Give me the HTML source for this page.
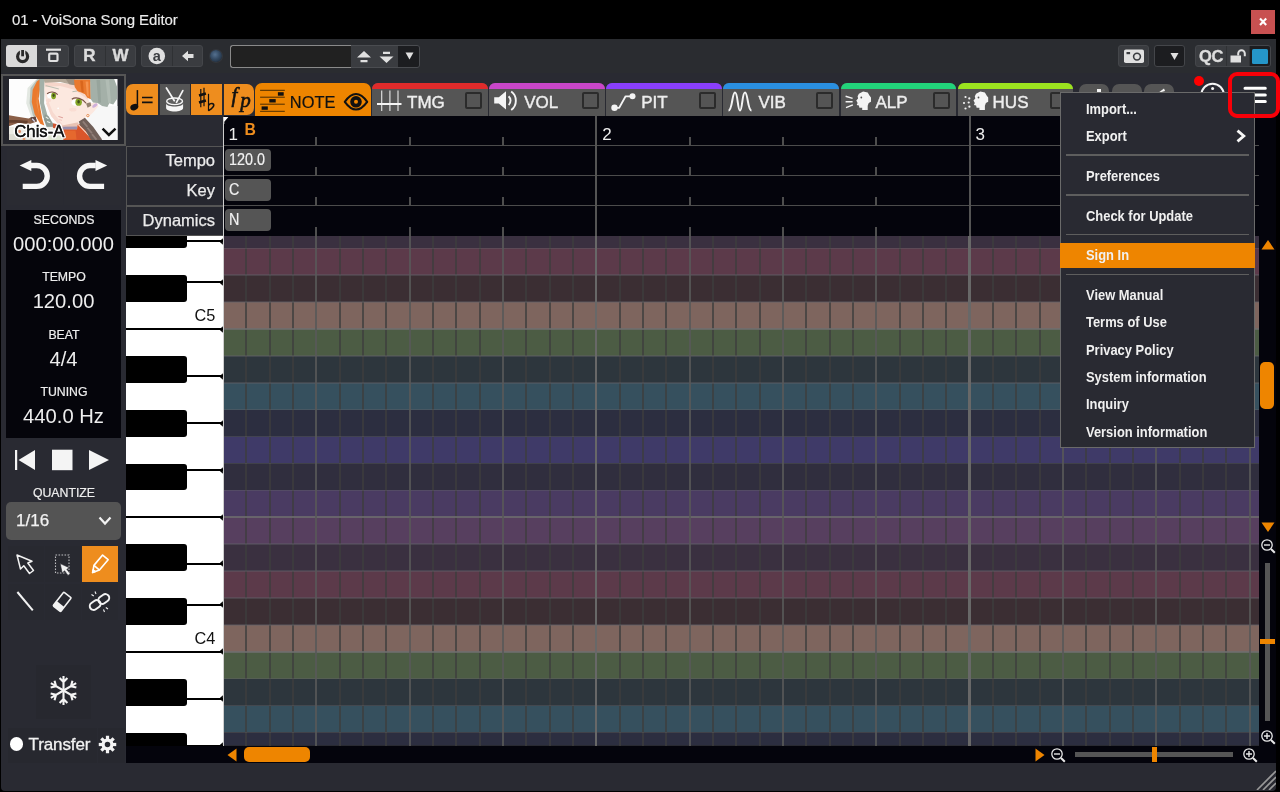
<!DOCTYPE html>
<html>
<head>
<meta charset="utf-8">
<title>01 - VoiSona Song Editor</title>
<style>
*{box-sizing:border-box;margin:0;padding:0}
html{will-change:transform}
html,body{width:1280px;height:792px;overflow:hidden;background:#000;font-family:"Liberation Sans",sans-serif;color:#eee}
.a{position:absolute}
#win{left:1px;top:0;width:1275px;height:791px;background:#292a32;border-radius:0 0 4px 4px;overflow:hidden}
#title{left:0;top:0;width:1280px;height:38.5px;background:#000}
#title span{position:absolute;left:12px;top:11.3px;font-size:15px;color:#ebebeb;letter-spacing:-0.12px;-webkit-text-stroke:0.15px #ebebeb}
#close{left:1251px;top:9.8px;width:24.2px;height:24px;background:#c85151}
#tb{left:1px;top:39px;width:1275px;height:34px;background:#2a2c30}
.grp{position:absolute;top:45px;height:22px;border-radius:3px;background:#3a3c40;border:1px solid #44464a}
/* main */
#ruler{left:224px;top:116px;width:1035px;height:120px;background:#04040c}
#grid{left:224px;top:236px;width:1035px;height:510px;overflow:hidden}
.row{position:absolute;left:0;width:1035px}
#piano{left:126px;top:236px;width:97px;height:510px;background:#fff;overflow:hidden}
.bk{position:absolute;left:0;width:61px;background:#000;border-radius:0 3px 3px 0}
.wl{position:absolute;left:0;width:97px;height:1.8px;background:#000}
.lbl{position:absolute;left:126px;margin-top:-0.5px;width:97px;height:30px;background:#26272f;border:1px solid #555;border-right:none;font-size:16.5px;color:#ececec;text-align:right;padding:4.5px 8px 0 0;-webkit-text-stroke:0.25px #ececec}
.val{position:absolute;left:224.9px;width:46px;height:22.2px;background:#555;border-radius:4px}
.val span{position:absolute;left:4px;top:1.2px;font-size:16.8px;color:#f2f2f2;transform:scaleX(0.855);transform-origin:0 50%;-webkit-text-stroke:0.2px #f2f2f2;white-space:nowrap}
.tab{position:absolute;top:83.3px;width:115.6px;height:32.7px;background:#555;border-radius:6px 6px 0 0;overflow:hidden;font-size:17px;color:#eee}
.tab i{position:absolute;left:0;top:0;width:100%;height:5.5px}
.tab b{position:absolute;font-weight:normal;top:9.7px;-webkit-text-stroke:0.4px #eee}
.tab u{position:absolute;left:92.6px;top:9px;width:17px;height:17px;border:2px solid #2b2b2b;border-radius:2px;background:#555}
.obtn{position:absolute;top:83px;height:33px;background:#ee8d1e}
.info{position:absolute;left:7px;width:114px;text-align:center;color:#eee}
.info.s{font-size:12.3px;-webkit-text-stroke:0.2px #eee}
.info.v{font-size:20.2px;left:6.5px}
.tool{position:absolute;width:36px;height:36px;background:#27282f}
#menu{left:1060px;top:92px;width:195px;height:356px;background:#292a32;border:1px solid #6a6a6a}
#menu div{position:absolute;left:25px;font-size:14.6px;line-height:17px;font-weight:bold;color:#f0f0f0;white-space:nowrap;transform:scaleX(0.885);transform-origin:0 50%}
#menu hr{position:absolute;left:5px;width:183px;height:1.6px;border:none;background:#5e5e5e}
</style>
</head>
<body>
<div id="win" class="a"></div>
<div id="title" class="a"><span>01 - VoiSona Song Editor</span></div>
<div id="close" class="a"><svg width="24" height="24"><path d="M9 8.6l6.2 6.4M15.2 8.6l-6.2 6.4" stroke="#fff" stroke-width="2.1"/></svg></div>
<div id="tb" class="a"></div>
<div class="grp" style="left:6px;width:63px"></div>
<div class="a" style="left:6px;top:45px;width:31px;height:22px;background:#d9d9d9;border-radius:3px 0 0 3px"></div>
<svg class="a" style="left:6px;top:45px" width="31" height="22"><circle cx="16.6" cy="11.6" r="5" fill="none" stroke="#2a2a2a" stroke-width="3.2"/><path d="M16.6 4.5V11.5" stroke="#d9d9d9" stroke-width="5.4"/><path d="M16.6 5V11.3" stroke="#2a2a2a" stroke-width="2.8"/></svg>
<svg class="a" style="left:37px;top:45px" width="31" height="22"><path d="M9 4.7H24" stroke="#e0e0e0" stroke-width="2.2"/><rect x="12.2" y="8.6" width="8.3" height="7.4" rx="1" fill="none" stroke="#e0e0e0" stroke-width="2.2"/></svg>
<div class="grp" style="left:74px;width:62px"></div>
<div class="a" style="left:104.5px;top:46px;width:1px;height:20px;background:#2f3134"></div>
<div class="a" style="left:74px;top:46px;width:31px;text-align:center;font-size:17px;font-weight:bold;color:#dcdcdc;-webkit-text-stroke:0.4px #dcdcdc">R</div>
<div class="a" style="left:105px;top:46px;width:31px;text-align:center;font-size:17px;font-weight:bold;color:#dcdcdc;-webkit-text-stroke:0.4px #dcdcdc">W</div>
<div class="grp" style="left:141px;width:62px"></div>
<div class="a" style="left:171.5px;top:46px;width:1px;height:20px;background:#2f3134"></div>
<svg class="a" style="left:141px;top:45px" width="31" height="22"><circle cx="15.8" cy="11" r="8.3" fill="#e0e0e0"/><text x="15.8" y="15.6" style="font-family:'Liberation Sans',sans-serif" font-weight="bold" font-size="14.5" text-anchor="middle" fill="#3a3c40">a</text></svg>
<svg class="a" style="left:172px;top:45px" width="31" height="22"><path d="M10 11L16 5.8V9H21.5V13H16V16.2Z" fill="#e0e0e0"/></svg>
<div class="a" style="left:210px;top:50px;width:12px;height:12px;border-radius:6px;background:radial-gradient(circle at 42% 38%,#54708f 0%,#344a63 45%,#18222f 100%);box-shadow:0 0 0 1px #34373c"></div>
<div class="a" style="left:230px;top:44.5px;width:190px;height:23px;border-radius:3px;background:#3a3c40;border:1px solid #4a4c50"></div>
<div class="a" style="left:230px;top:44.5px;width:121px;height:23px;border-radius:3px 0 0 3px;background:#212121;border:1.5px solid #8a8a8a;border-right:none"></div>
<div class="a" style="left:398px;top:45.5px;width:21px;height:21px;border-radius:0 2px 2px 0;background:#1c1d20"></div>
<svg class="a" style="left:351px;top:46px" width="47" height="22"><path d="M6 11.5L13 5L20 11.5Z M9.5 14H16.5V16.2H9.5Z" fill="#e0e0e0"/><path d="M28.5 10.5L35.5 17L42.5 10.5Z M32 5.8H39V8H32Z" fill="#e0e0e0"/></svg>
<svg class="a" style="left:398px;top:45px" width="22" height="22"><path d="M7.5 7.5H15.5L11.5 14.5Z" fill="#e0e0e0"/></svg>
<div class="grp" style="left:1118px;width:31px"></div>
<svg class="a" style="left:1118px;top:45px" width="31" height="22"><rect x="6" y="4.5" width="20" height="13.5" rx="1.8" fill="#e0e0e0"/><rect x="8.5" y="7" width="3.6" height="2.2" fill="#3a3c40"/><circle cx="19" cy="11.6" r="3.4" fill="#e0e0e0" stroke="#3a3c40" stroke-width="1.6"/></svg>
<div class="grp" style="left:1154px;width:31px;background:#1c1d20"></div>
<svg class="a" style="left:1154px;top:45px" width="31" height="22"><path d="M16.5 8H24.5L20.5 15Z" fill="#e0e0e0"/></svg>
<div class="grp" style="left:1195px;width:76px"></div>
<div class="a" style="left:1226px;top:46px;width:1px;height:20px;background:#2f3134"></div>
<div class="a" style="left:1249px;top:46px;width:1px;height:20px;background:#2f3134"></div>
<div class="a" style="left:1196px;top:46.5px;width:30px;text-align:center;font-size:16.5px;font-weight:bold;color:#dcdcdc;letter-spacing:-0.3px;-webkit-text-stroke:0.35px #dcdcdc">QC</div>
<svg class="a" style="left:1227px;top:45px" width="22" height="22"><rect x="3.5" y="10.5" width="10.5" height="7" fill="#e0e0e0"/><path d="M11.2 10.5V8.6A3.3 3.3 0 0 1 17.8 8.6V11.2" fill="none" stroke="#e0e0e0" stroke-width="2"/></svg>
<div class="a" style="left:1250px;top:46px;width:20px;height:20px;background:#1c1d20;border-radius:0 2px 2px 0"></div>
<div class="a" style="left:1251.5px;top:48.5px;width:16.5px;height:15px;background:#2596c8;border-radius:1.5px"></div>
<div class="a" style="left:1px;top:73.5px;width:125px;height:72.5px;background:#24252c;border:2.5px solid #555"></div>
<svg class="a" style="left:9.2px;top:78.9px" width="108.5" height="61.3" viewBox="35 32 1197 676" preserveAspectRatio="none"><defs><filter id="bl" x="-5%" y="-5%" width="110%" height="110%"><feGaussianBlur stdDeviation="5"/></filter><clipPath id="cp"><rect x="35" y="32" width="1197" height="676"/></clipPath></defs><rect x="35" y="32" width="1197" height="676" fill="#fdfdfd"/><g clip-path="url(#cp)"><g filter="url(#bl)"><rect x="900" y="330" width="340" height="380" fill="#f7f7f7"/><path d="M340 32L240 130L225 300L280 450L340 450L310 250L350 80L390 32Z" fill="#e3e8e2"/><path d="M350 32L272 130L262 300L300 440L335 440L305 250L345 80L385 32Z" fill="#b7c2ba"/><path d="M342 60L378 32L385 90L362 250L402 470L425 545L380 525L318 420L286 285L296 150Z" fill="#ea7a2e"/><path d="M345 160L340 300L370 440L350 300Z" fill="#f39a55"/><path d="M372 32L435 32L428 110L422 300L470 470L530 565L470 565L410 450L377 300L370 120Z" fill="#a3b0a8"/><path d="M430 420L470 440L530 540L500 580L450 560L420 480Z" fill="#8e9b93"/><path d="M440 450L470 470M455 500L490 515" stroke="#e9efe9" stroke-width="12"/><path d="M35 432L130 448L250 468L325 442L345 500L255 530L140 515L35 552Z" fill="#8a5e46"/><path d="M35 500L120 500L240 508" stroke="#64402f" stroke-width="30" fill="none"/><path d="M270 455L330 448L338 492L290 500Z" fill="#5e4a44"/><path d="M290 470L320 500" stroke="#d8d4e6" stroke-width="14"/><rect x="35" y="560" width="640" height="150" fill="#ecebe4"/><path d="M35 640H300V708H35Z" fill="#dcdad0"/><circle cx="150" cy="610" r="18" fill="#e08a66"/><circle cx="200" cy="695" r="16" fill="#e6996e"/><path d="M470 660H760V708H470Z" fill="#dfe6d4"/><path d="M428 60L760 92L900 232L930 300L1005 288L1022 330L965 400L915 445L880 455L800 512L700 545L640 552L575 528L500 440L445 300L425 150Z" fill="#fce8df"/><path d="M428 60L760 92L900 232L905 260L760 150L600 110L432 120Z" fill="#f6d6ca"/><path d="M445 300L500 440L575 528L640 552L600 500L520 400L470 280Z" fill="#f7d9cf"/><path d="M620 545L800 510L815 590L625 590Z" fill="#e9c3b4"/><path d="M625 558L785 556L785 592L625 592Z" fill="#9c90ad"/><path d="M635 590L785 590L792 540L835 520L990 708L635 708Z" fill="#d9552a"/><path d="M650 600L770 600L780 700L660 700Z" fill="#e5672f"/><path d="M800 535L965 705" stroke="#f3ddcd" stroke-width="12"/><path d="M520 520L570 530L560 580L520 570Z" fill="#cf5630"/><path d="M805 500L872 458L965 560L1062 700L1050 708L940 708L880 600L820 545Z" fill="#6f5e59"/><path d="M850 500L900 560M900 570L950 630M950 640L1000 700" stroke="#8f7d76" stroke-width="20"/><path d="M420 32L945 32L945 60L765 104L600 64L430 74Z" fill="#b3a898"/><path d="M660 32L760 32L765 100L700 90Z" fill="#9b8f80"/><path d="M752 40L935 40L938 255L900 240L872 200L832 180L792 168L760 120Z" fill="#e9792d"/><path d="M820 50L850 50L860 180L835 175Z" fill="#d9661f"/><path d="M880 60L910 60L915 230L895 215Z" fill="#f59450"/><path d="M930 32L1195 32L1228 120L1232 245L1185 312L1142 300L1120 342L1062 330L1012 298L962 290L936 252Z" fill="#a4b0a8"/><path d="M1000 40L1040 40L1050 290L1020 295Z" fill="#97a49c"/><path d="M1100 40L1140 40L1160 290L1130 300Z" fill="#b1bcb4"/><path d="M885 302L935 288L942 328L902 348Z" fill="#95826f"/><ellipse cx="982" cy="325" rx="34" ry="17" transform="rotate(-35 982 325)" fill="#cfb0da"/><circle cx="905" cy="436" r="13" fill="#fff" stroke="#e27a35" stroke-width="9"/><ellipse cx="495" cy="215" rx="40" ry="32" fill="#fff"/><ellipse cx="527" cy="218" rx="27" ry="38" fill="#86a626"/><ellipse cx="527" cy="212" rx="12" ry="18" fill="#3f4d1c"/><path d="M455 195C490 165 540 170 572 205" stroke="#7a5346" stroke-width="13" fill="none"/><ellipse cx="770" cy="292" rx="46" ry="34" fill="#fff"/><ellipse cx="803" cy="288" rx="36" ry="40" fill="#86a626"/><ellipse cx="803" cy="282" rx="14" ry="19" fill="#3f4d1c"/><path d="M728 255C770 225 850 245 885 300" stroke="#7a5346" stroke-width="13" fill="none"/><path d="M440 105L585 142" stroke="#aab4a6" stroke-width="9"/><path d="M735 172L785 165" stroke="#aab4a6" stroke-width="9"/><ellipse cx="470" cy="270" rx="30" ry="18" fill="#f6c9be" opacity="0.4"/><ellipse cx="740" cy="370" rx="40" ry="20" fill="#f6c9be" opacity="0.35"/><circle cx="577" cy="355" r="10" fill="#fff"/><path d="M580 445L630 460" stroke="#dd9e98" stroke-width="11"/><path d="M590 480L620 488" stroke="#efbab2" stroke-width="8"/></g></g></svg><svg class="a" style="left:9px;top:118px" width="70" height="24"><text x="5.3" y="18.7" style="font-family:'Liberation Sans',sans-serif;font-size:16.7px;paint-order:stroke" fill="#141414" stroke="#fff" stroke-width="3.2" stroke-linejoin="round" stroke-opacity="0.92">Chis-A</text><text x="5.3" y="18.7" style="font-family:'Liberation Sans',sans-serif;font-size:16.7px" fill="#141414" stroke="#141414" stroke-width="0.3">Chis-A</text></svg><svg class="a" style="left:100px;top:125px" width="18" height="13"><path d="M2.6 3.6L8.9 9.9L15.5 3.6" fill="none" stroke="#111" stroke-width="2.5"/></svg>
<div class="a" style="left:7px;top:149px;width:56px;height:56px;background:#2a2b32"></div>
<div class="a" style="left:64px;top:149px;width:57px;height:56px;background:#2a2b32"></div>
<svg class="a" style="left:0;top:0" width="126" height="210"><path d="M31 165.5H36.8A10.45 10.45 0 0 1 36.8 186.4H22.7" fill="none" stroke="#f6f6f6" stroke-width="5.4"/><path d="M19.6 165.5L31.3 159.9V171.1Z" fill="#f6f6f6"/><g transform="translate(126.8,0) scale(-1,1)"><path d="M31 165.5H36.8A10.45 10.45 0 0 1 36.8 186.4H22.7" fill="none" stroke="#f6f6f6" stroke-width="5.4"/><path d="M19.6 165.5L31.3 159.9V171.1Z" fill="#f6f6f6"/></g></svg>
<div class="a" style="left:6px;top:209.5px;width:115px;height:228.5px;background:#05050b"></div>
<div class="info s" style="top:213.0px">SECONDS</div>
<div class="info v" style="top:232.8px">000:00.000</div>
<div class="info s" style="top:270.4px">TEMPO</div>
<div class="info v" style="top:290.2px">120.00</div>
<div class="info s" style="top:327.8px">BEAT</div>
<div class="info v" style="top:347.6px">4/4</div>
<div class="info s" style="top:385.2px">TUNING</div>
<div class="info v" style="top:405.0px">440.0 Hz</div>
<svg class="a" style="left:7px;top:444px" width="114" height="32"><path d="M8 6H10.2V26H8Z M28 6V26L11.5 16Z" fill="#f4f4f4"/><rect x="45" y="5.7" width="20.5" height="20.5" fill="#f4f4f4"/><path d="M82 6V26L102 16Z" fill="#f4f4f4"/></svg>
<div class="info s" style="top:486px">QUANTIZE</div>
<div class="a" style="left:6px;top:502px;width:115px;height:37.5px;border-radius:5px;background:#545454"></div>
<div class="a" style="left:16px;top:510.5px;font-size:17px;color:#f2f2f2;-webkit-text-stroke:0.25px #f2f2f2">1/16</div>
<svg class="a" style="left:97px;top:514px" width="16" height="14"><path d="M2.5 3.5L8 9.5L13.5 3.5" fill="none" stroke="#f2f2f2" stroke-width="2.2"/></svg>
<div class="tool" style="left:8px;top:546px;background:#282930"></div>
<div class="tool" style="left:45px;top:546px;background:#282930"></div>
<div class="tool" style="left:82px;top:546px;background:#ee8d1e"></div>
<div class="tool" style="left:8px;top:584px;background:#282930"></div>
<div class="tool" style="left:45px;top:584px;background:#282930"></div>
<div class="tool" style="left:82px;top:584px;background:#282930"></div>
<svg class="a" style="left:8px;top:546px" width="36" height="36"><path d="M9 9L12.5 23L15.8 19.8L21.5 27.5L25.5 24.5L19.8 17L24 15.2Z" fill="none" stroke="#f2f2f2" stroke-width="1.5" stroke-linejoin="round"/></svg>
<svg class="a" style="left:45px;top:546px" width="36" height="36"><rect x="10.5" y="9" width="13.5" height="18" fill="none" stroke="#f2f2f2" stroke-width="1.1" stroke-dasharray="1.6 1.4" opacity="0.75"/><path d="M15.2 17.6L17.2 27L19.6 24.8L23 29.4L25.2 27.8L21.8 23.3L24.4 21.8Z" fill="#f2f2f2" stroke="#282930" stroke-width="0.6"/></svg>
<svg class="a" style="left:82px;top:546px" width="36" height="36"><g transform="translate(17.3,18.6) rotate(40) scale(0.9)" fill="none" stroke="#fff" stroke-width="1.8" stroke-linejoin="round"><path d="M-4 -10.5H4V4.5L0 11.5L-4 4.5Z"/><path d="M-4 4.5H4"/><path d="M-1.5 8.8L0 11.5L1.5 8.8Z" fill="#fff"/></g></svg>
<svg class="a" style="left:8px;top:584px" width="36" height="36"><path d="M9.4 8L24.8 26.4" stroke="#f2f2f2" stroke-width="2"/></svg>
<svg class="a" style="left:45px;top:584px" width="36" height="36"><g transform="translate(17.2,17.8) rotate(38) scale(0.92)"><rect x="-5.2" y="-9.5" width="10.4" height="19" rx="1" fill="none" stroke="#f2f2f2" stroke-width="1.7"/><rect x="-5.2" y="3" width="10.4" height="6.5" fill="#f2f2f2"/></g></svg>
<svg class="a" style="left:82px;top:584px" width="36" height="36"><g transform="translate(17.5,18) rotate(-35)" fill="none" stroke="#f2f2f2" stroke-width="2"><rect x="-11" y="-3.8" width="11.5" height="7.6" rx="3.8"/><rect x="-0.5" y="-3.8" width="11.5" height="7.6" rx="3.8"/></g><path d="M13 7.5L14 10M9.5 10.5L11.8 12M22.5 28L21.5 25.5M26 25L23.8 23.5" stroke="#f2f2f2" stroke-width="1.1"/></svg>
<div class="a" style="left:36px;top:665px;width:55px;height:54px;background:#27282f"></div>
<svg class="a" style="left:47px;top:674.3px" width="33" height="33" viewBox="-16.5 -16.5 33 33"><g stroke="#f4f4f4" stroke-width="2.1" fill="none"><g transform="rotate(0)"><path d="M0 0V-14.6M-3.9 -12.6L0 -8.6L3.9 -12.6"/></g><g transform="rotate(60)"><path d="M0 0V-14.6M-3.9 -12.6L0 -8.6L3.9 -12.6"/></g><g transform="rotate(120)"><path d="M0 0V-14.6M-3.9 -12.6L0 -8.6L3.9 -12.6"/></g><g transform="rotate(180)"><path d="M0 0V-14.6M-3.9 -12.6L0 -8.6L3.9 -12.6"/></g><g transform="rotate(240)"><path d="M0 0V-14.6M-3.9 -12.6L0 -8.6L3.9 -12.6"/></g><g transform="rotate(300)"><path d="M0 0V-14.6M-3.9 -12.6L0 -8.6L3.9 -12.6"/></g></g></svg>
<div class="a" style="left:7.5px;top:727.5px;width:89px;height:35px;background:#27282f"></div>
<div class="a" style="left:97.5px;top:727.5px;width:27.5px;height:35px;background:#27282f"></div>
<div class="a" style="left:9.8px;top:737.3px;width:13.5px;height:13.5px;border-radius:7px;background:#fff"></div>
<div class="a" style="left:28.5px;top:735px;font-size:17px;color:#f2f2f2;letter-spacing:-0.1px;-webkit-text-stroke:0.3px #f2f2f2">Transfer</div>
<svg class="a" style="left:98.3px;top:734.8px" width="19" height="19" viewBox="-10 -10 20 20"><g fill="#f4f4f4"><rect x="-1.7" y="-9.2" width="3.4" height="5" transform="rotate(0)"/><rect x="-1.7" y="-9.2" width="3.4" height="5" transform="rotate(45)"/><rect x="-1.7" y="-9.2" width="3.4" height="5" transform="rotate(90)"/><rect x="-1.7" y="-9.2" width="3.4" height="5" transform="rotate(135)"/><rect x="-1.7" y="-9.2" width="3.4" height="5" transform="rotate(180)"/><rect x="-1.7" y="-9.2" width="3.4" height="5" transform="rotate(225)"/><rect x="-1.7" y="-9.2" width="3.4" height="5" transform="rotate(270)"/><rect x="-1.7" y="-9.2" width="3.4" height="5" transform="rotate(315)"/></g><circle r="4.6" fill="none" stroke="#f4f4f4" stroke-width="3.4"/></svg>
<div class="obtn" style="left:126.3px;width:31.5px;border-radius:7px 0 0 7px;top:83.6px;height:31.6px"></div>
<div class="obtn" style="left:159.5px;width:30px;background:#555;top:83.6px;height:31.6px"></div>
<div class="obtn" style="left:191px;width:30.8px;top:83.6px;height:31.6px"></div>
<div class="obtn" style="left:223.8px;width:30.4px;border-radius:0 7px 7px 0;top:83.6px;height:31.6px"></div>
<svg class="a" style="left:126.3px;top:83px" width="32" height="33"><ellipse cx="8.3" cy="24.1" rx="4.1" ry="3" transform="rotate(-22 8.3 24.1)" fill="#111"/><path d="M11.4 23.6V7.1" stroke="#111" stroke-width="1.5"/><path d="M16 14.5H26.6M16 19.3H26.6" stroke="#111" stroke-width="1.7"/></svg>
<svg class="a" style="left:159.6px;top:83px" width="31" height="33"><path d="M6.1 20.3V25C6.1 29.6 23.1 29.6 23.1 25V20.3C23.1 24.6 6.1 24.6 6.1 20.3Z" fill="#f6f6f6"/><ellipse cx="14.6" cy="18.3" rx="7.9" ry="3.3" fill="#606060" stroke="#f6f6f6" stroke-width="1.4"/><path d="M6.4 5L14.3 17.7M22.8 7.6L16.5 19.3" stroke="#f6f6f6" stroke-width="1.7" stroke-linecap="round"/></svg>
<svg class="a" style="left:191px;top:83px" width="31" height="33"><g stroke="#111" fill="none"><path d="M9.8 6V24.3M13 4.8V23.2" stroke-width="1.2"/><path d="M8 12.6L14.9 10.6M8 19.4L14.9 17.4" stroke-width="2.6"/><path d="M17.5 10.8V27.8" stroke-width="1.2"/><path d="M17.5 22.2C19.5 19.8 23.2 20 22.7 22.6C22.2 24.8 19.3 26.5 17.5 27.8" stroke-width="1.6"/></g></svg>
<svg class="a" style="left:223.9px;top:83px" width="31" height="33"><g style="font-family:'Liberation Serif',serif;font-style:italic" fill="#111" stroke="#111" stroke-width="0.6"><text x="7.6" y="18.6" font-size="21">f</text><text x="16.2" y="24.2" font-size="21">p</text></g></svg>
<div class="obtn" style="left:255.2px;width:115.8px;border-radius:7px 7px 0 0;background:#ee8500"></div>
<svg class="a" style="left:255.2px;top:83px" width="116" height="33"><g stroke="#4a2c00" stroke-width="1"><path d="M5.1 7.3H29.8M5.1 14.2H29.8M5.1 21.2H29.8M5.1 28.3H29.8"/></g><rect x="22.9" y="9.2" width="5.8" height="3.5" fill="#111"/><rect x="14.3" y="16.1" width="6.4" height="3.4" fill="#111"/><rect x="6.6" y="23.4" width="6.2" height="3.4" fill="#111"/><path d="M89.8 18.8Q101 3.3 112.2 18.8Q101 34.3 89.8 18.8Z" fill="none" stroke="#111" stroke-width="2.1" stroke-linejoin="round"/><circle cx="101" cy="18.8" r="3.9" fill="none" stroke="#111" stroke-width="3.8"/></svg>
<div class="a" style="left:289.8px;top:93.2px;font-size:16.4px;color:#111;-webkit-text-stroke:0.2px #111">NOTE</div>
<div class="tab" style="left:372px"><i style="background:#e02b2b"></i><svg style="position:absolute;left:0;top:0" width="34" height="33"><g stroke="#f4f4f4" fill="none"><path d="M9.7 7.5V28M17.9 7.5V28M26 7.5V28" stroke-width="1.2" opacity="0.85"/><path d="M5 21H29.5" stroke-width="2.2"/></g></svg><b style="left:35px">TMG</b><u></u></div>
<div class="tab" style="left:489.2px"><i style="background:#c946c9"></i><svg style="position:absolute;left:0;top:0" width="34" height="33"><path d="M5.2 14.2H9.8L17 8.2V26.4L9.8 20.6H5.2Z" fill="#f4f4f4"/><path d="M19.6 13.2C22.2 15.6 22.2 19.6 19.6 22M22.2 8.6C28.4 13 28.4 22.6 22.2 27" fill="none" stroke="#f4f4f4" stroke-width="1.9"/></svg><b style="left:35px">VOL</b><u></u></div>
<div class="tab" style="left:606.2px"><i style="background:#8a3ffc"></i><svg style="position:absolute;left:0;top:0" width="34" height="33"><path d="M8.5 24.8H13.2L19.6 13.3H26" fill="none" stroke="#f4f4f4" stroke-width="1.8" stroke-linejoin="round"/><circle cx="8.5" cy="24.8" r="3.2" fill="#f4f4f4"/><circle cx="26.5" cy="13.3" r="3" fill="#f4f4f4"/></svg><b style="left:35px">PIT</b><u></u></div>
<div class="tab" style="left:723.4px"><i style="background:#2a8fe0"></i><svg style="position:absolute;left:0;top:0" width="34" height="33"><path d="M5.5 27.5C9.5 27.5 9 9.5 12 9.5C15 9.5 14.5 27.5 17 27.5C19.5 27.5 19 9.5 22 9.5C25 9.5 24.5 27.5 28.5 27.5" fill="none" stroke="#f4f4f4" stroke-width="2"/></svg><b style="left:35px">VIB</b><u></u></div>
<div class="tab" style="left:840.5px"><i style="background:#22d37a"></i><svg style="position:absolute;left:0;top:0" width="34" height="33"><path d="M4.6 13.2L11.6 15.4M4.6 18.8H11.6M5 24.6L11.9 21.9" stroke="#f4f4f4" stroke-width="1.5"/><path d="M17.9 10.8L22.1 8.4L26.7 9.5L28.6 12.7L30 14.5V18.8L27.7 20L26.7 22.8V26.9H21.2V24.7H18.4L17.9 22.4L15.7 21.9L16.6 20L15.3 17.6L17.1 15.4L16.6 13.2Z" fill="#f4f4f4"/><circle cx="20.3" cy="14.5" r="0.9" fill="#555"/></svg><b style="left:35px">ALP</b><u></u></div>
<div class="tab" style="left:957.6px"><i style="background:#9be31f"></i><svg style="position:absolute;left:0;top:0" width="34" height="33"><g fill="#f4f4f4"><circle cx="7.5" cy="14" r="1.1"/><circle cx="11.3" cy="15.4" r="1.1"/><circle cx="6" cy="20" r="1.1"/><circle cx="10.7" cy="19.5" r="1.1"/><circle cx="7.5" cy="25.5" r="1.1"/><circle cx="11.4" cy="23.7" r="1.1"/></g><g transform="translate(0.2 0)"><path d="M17.9 10.8L22.1 8.4L26.7 9.5L28.6 12.7L30 14.5V18.8L27.7 20L26.7 22.8V26.9H21.2V24.7H18.4L17.9 22.4L15.7 21.9L16.6 20L15.3 17.6L17.1 15.4L16.6 13.2Z" fill="#f4f4f4"/><circle cx="20.3" cy="14.5" r="0.9" fill="#555"/></g></svg><b style="left:35px">HUS</b><u></u></div>
<div class="a" style="left:1079px;top:83.5px;width:30px;height:32px;background:#555;border-radius:7px 7px 0 0"></div>
<div class="a" style="left:1111.6px;top:83.5px;width:30px;height:32px;background:#555;border-radius:7px 7px 0 0"></div>
<div class="a" style="left:1144.2px;top:83.5px;width:30px;height:32px;background:#555;border-radius:7px 7px 0 0"></div>
<div class="a" style="left:1097px;top:88.5px;width:4px;height:5px;background:#f4f4f4"></div>
<svg class="a" style="left:1155px;top:86px" width="12" height="8"><path d="M3 7L9 2.5L10 5Z" fill="#f4f4f4"/></svg>
<svg class="a" style="left:1198px;top:80px" width="30" height="30"><circle cx="14.6" cy="15" r="11.3" fill="none" stroke="#f4f4f4" stroke-width="2"/><circle cx="14.6" cy="8.6" r="1.5" fill="#f4f4f4"/><path d="M14.6 12V22" stroke="#f4f4f4" stroke-width="2.4"/></svg>
<div class="a" style="left:1193.7px;top:75.6px;width:10.4px;height:10.4px;border-radius:6px;background:#ff0000"></div>
<svg class="a" style="left:1240px;top:83px" width="30" height="24"><path d="M5 5.3H25.3M14 12H25.3M14 18.5H25.3" stroke="#fff" stroke-width="3" stroke-linecap="round"/></svg>
<div id="ruler" class="a"></div>
<div id="grid" class="a">
<div class="row" style="top:0.00px;height:12.30px;background:#3a3040"></div>
<div class="row" style="top:12.30px;height:26.90px;background:#5c3a4a"></div>
<div class="row" style="top:39.20px;height:26.90px;background:#3b2e33"></div>
<div class="row" style="top:66.10px;height:26.90px;background:#7e655e"></div>
<div class="row" style="top:93.00px;height:26.90px;background:#4c5c44"></div>
<div class="row" style="top:119.90px;height:26.90px;background:#2d363d"></div>
<div class="row" style="top:146.80px;height:26.90px;background:#36505e"></div>
<div class="row" style="top:173.70px;height:26.90px;background:#2c2e40"></div>
<div class="row" style="top:200.60px;height:26.90px;background:#3f3a68"></div>
<div class="row" style="top:227.50px;height:26.90px;background:#302e3e"></div>
<div class="row" style="top:254.40px;height:26.90px;background:#4a3b62"></div>
<div class="row" style="top:281.30px;height:26.90px;background:#573f5f"></div>
<div class="row" style="top:308.20px;height:26.90px;background:#3a3040"></div>
<div class="row" style="top:335.10px;height:26.90px;background:#5c3a4a"></div>
<div class="row" style="top:362.00px;height:26.90px;background:#3b2e33"></div>
<div class="row" style="top:388.90px;height:26.90px;background:#7e655e"></div>
<div class="row" style="top:415.80px;height:26.90px;background:#4c5c44"></div>
<div class="row" style="top:442.70px;height:26.90px;background:#2d363d"></div>
<div class="row" style="top:469.60px;height:26.90px;background:#36505e"></div>
<div class="row" style="top:496.50px;height:12.50px;background:#2c2e40"></div>
<div class="a" style="left:21.33px;top:0;width:2.0px;height:510px;background:rgba(62,61,62,0.75)"></div>
<div class="a" style="left:44.66px;top:0;width:2.0px;height:510px;background:rgba(62,61,62,0.75)"></div>
<div class="a" style="left:67.99px;top:0;width:2.0px;height:510px;background:rgba(62,61,62,0.75)"></div>
<div class="a" style="left:114.66px;top:0;width:2.0px;height:510px;background:rgba(62,61,62,0.75)"></div>
<div class="a" style="left:137.99px;top:0;width:2.0px;height:510px;background:rgba(62,61,62,0.75)"></div>
<div class="a" style="left:161.32px;top:0;width:2.0px;height:510px;background:rgba(62,61,62,0.75)"></div>
<div class="a" style="left:207.98px;top:0;width:2.0px;height:510px;background:rgba(62,61,62,0.75)"></div>
<div class="a" style="left:231.31px;top:0;width:2.0px;height:510px;background:rgba(62,61,62,0.75)"></div>
<div class="a" style="left:254.64px;top:0;width:2.0px;height:510px;background:rgba(62,61,62,0.75)"></div>
<div class="a" style="left:301.31px;top:0;width:2.0px;height:510px;background:rgba(62,61,62,0.75)"></div>
<div class="a" style="left:324.64px;top:0;width:2.0px;height:510px;background:rgba(62,61,62,0.75)"></div>
<div class="a" style="left:347.97px;top:0;width:2.0px;height:510px;background:rgba(62,61,62,0.75)"></div>
<div class="a" style="left:394.63px;top:0;width:2.0px;height:510px;background:rgba(62,61,62,0.75)"></div>
<div class="a" style="left:417.96px;top:0;width:2.0px;height:510px;background:rgba(62,61,62,0.75)"></div>
<div class="a" style="left:441.29px;top:0;width:2.0px;height:510px;background:rgba(62,61,62,0.75)"></div>
<div class="a" style="left:487.96px;top:0;width:2.0px;height:510px;background:rgba(62,61,62,0.75)"></div>
<div class="a" style="left:511.29px;top:0;width:2.0px;height:510px;background:rgba(62,61,62,0.75)"></div>
<div class="a" style="left:534.62px;top:0;width:2.0px;height:510px;background:rgba(62,61,62,0.75)"></div>
<div class="a" style="left:581.28px;top:0;width:2.0px;height:510px;background:rgba(62,61,62,0.75)"></div>
<div class="a" style="left:604.61px;top:0;width:2.0px;height:510px;background:rgba(62,61,62,0.75)"></div>
<div class="a" style="left:627.94px;top:0;width:2.0px;height:510px;background:rgba(62,61,62,0.75)"></div>
<div class="a" style="left:674.61px;top:0;width:2.0px;height:510px;background:rgba(62,61,62,0.75)"></div>
<div class="a" style="left:697.94px;top:0;width:2.0px;height:510px;background:rgba(62,61,62,0.75)"></div>
<div class="a" style="left:721.27px;top:0;width:2.0px;height:510px;background:rgba(62,61,62,0.75)"></div>
<div class="a" style="left:767.93px;top:0;width:2.0px;height:510px;background:rgba(62,61,62,0.75)"></div>
<div class="a" style="left:791.26px;top:0;width:2.0px;height:510px;background:rgba(62,61,62,0.75)"></div>
<div class="a" style="left:814.59px;top:0;width:2.0px;height:510px;background:rgba(62,61,62,0.75)"></div>
<div class="a" style="left:861.26px;top:0;width:2.0px;height:510px;background:rgba(62,61,62,0.75)"></div>
<div class="a" style="left:884.59px;top:0;width:2.0px;height:510px;background:rgba(62,61,62,0.75)"></div>
<div class="a" style="left:907.92px;top:0;width:2.0px;height:510px;background:rgba(62,61,62,0.75)"></div>
<div class="a" style="left:954.58px;top:0;width:2.0px;height:510px;background:rgba(62,61,62,0.75)"></div>
<div class="a" style="left:977.91px;top:0;width:2.0px;height:510px;background:rgba(62,61,62,0.75)"></div>
<div class="a" style="left:1001.24px;top:0;width:2.0px;height:510px;background:rgba(62,61,62,0.75)"></div>
<div class="row" style="top:11.55px;height:1.5px;background:rgba(98,98,104,0.42)"></div>
<div class="row" style="top:38.45px;height:1.5px;background:rgba(98,98,104,0.42)"></div>
<div class="row" style="top:65.35px;height:1.5px;background:rgba(98,98,104,0.42)"></div>
<div class="row" style="top:92.05px;height:1.9px;background:rgba(110,110,110,0.8)"></div>
<div class="row" style="top:119.15px;height:1.5px;background:rgba(98,98,104,0.42)"></div>
<div class="row" style="top:146.05px;height:1.5px;background:rgba(98,98,104,0.42)"></div>
<div class="row" style="top:172.95px;height:1.5px;background:rgba(98,98,104,0.42)"></div>
<div class="row" style="top:199.85px;height:1.5px;background:rgba(98,98,104,0.42)"></div>
<div class="row" style="top:226.75px;height:1.5px;background:rgba(98,98,104,0.42)"></div>
<div class="row" style="top:253.65px;height:1.5px;background:rgba(98,98,104,0.42)"></div>
<div class="row" style="top:280.35px;height:1.9px;background:rgba(110,110,110,0.8)"></div>
<div class="row" style="top:307.45px;height:1.5px;background:rgba(98,98,104,0.42)"></div>
<div class="row" style="top:334.35px;height:1.5px;background:rgba(98,98,104,0.42)"></div>
<div class="row" style="top:361.25px;height:1.5px;background:rgba(98,98,104,0.42)"></div>
<div class="row" style="top:388.15px;height:1.5px;background:rgba(98,98,104,0.42)"></div>
<div class="row" style="top:414.85px;height:1.9px;background:rgba(110,110,110,0.8)"></div>
<div class="row" style="top:441.95px;height:1.5px;background:rgba(98,98,104,0.42)"></div>
<div class="row" style="top:468.85px;height:1.5px;background:rgba(98,98,104,0.42)"></div>
<div class="row" style="top:495.75px;height:1.5px;background:rgba(98,98,104,0.42)"></div>
<div class="a" style="left:91.37px;top:0;width:1.9px;height:510px;background:rgba(88,88,88,0.85)"></div>
<div class="a" style="left:184.70px;top:0;width:1.9px;height:510px;background:rgba(88,88,88,0.85)"></div>
<div class="a" style="left:278.03px;top:0;width:1.9px;height:510px;background:rgba(88,88,88,0.85)"></div>
<div class="a" style="left:371.10px;top:0;width:2.4px;height:510px;background:#686868"></div>
<div class="a" style="left:464.68px;top:0;width:1.9px;height:510px;background:rgba(88,88,88,0.85)"></div>
<div class="a" style="left:558.00px;top:0;width:1.9px;height:510px;background:rgba(88,88,88,0.85)"></div>
<div class="a" style="left:651.32px;top:0;width:1.9px;height:510px;background:rgba(88,88,88,0.85)"></div>
<div class="a" style="left:744.40px;top:0;width:2.4px;height:510px;background:#686868"></div>
<div class="a" style="left:837.98px;top:0;width:1.9px;height:510px;background:rgba(88,88,88,0.85)"></div>
<div class="a" style="left:931.30px;top:0;width:1.9px;height:510px;background:rgba(88,88,88,0.85)"></div>
<div class="a" style="left:1024.62px;top:0;width:1.9px;height:510px;background:rgba(88,88,88,0.85)"></div>
</div>
<div class="a" style="left:224px;top:145px;width:1035px;height:1.3px;background:#4c4c4c"></div>
<div class="a" style="left:224px;top:175px;width:1035px;height:1.3px;background:#4c4c4c"></div>
<div class="a" style="left:224px;top:205px;width:1035px;height:1.3px;background:#4c4c4c"></div>
<div class="a" style="left:228.50px;top:124.6px;font-size:17px;color:#eee">1</div>
<div class="a" style="left:315.43px;top:137px;width:1.8px;height:9px;background:#4e4e4e"></div>
<div class="a" style="left:315.43px;top:167px;width:1.8px;height:9px;background:#4e4e4e"></div>
<div class="a" style="left:315.43px;top:197px;width:1.8px;height:9px;background:#4e4e4e"></div>
<div class="a" style="left:315.43px;top:227px;width:1.8px;height:9px;background:#4e4e4e"></div>
<div class="a" style="left:408.75px;top:137px;width:1.8px;height:9px;background:#4e4e4e"></div>
<div class="a" style="left:408.75px;top:167px;width:1.8px;height:9px;background:#4e4e4e"></div>
<div class="a" style="left:408.75px;top:197px;width:1.8px;height:9px;background:#4e4e4e"></div>
<div class="a" style="left:408.75px;top:227px;width:1.8px;height:9px;background:#4e4e4e"></div>
<div class="a" style="left:502.08px;top:137px;width:1.8px;height:9px;background:#4e4e4e"></div>
<div class="a" style="left:502.08px;top:167px;width:1.8px;height:9px;background:#4e4e4e"></div>
<div class="a" style="left:502.08px;top:197px;width:1.8px;height:9px;background:#4e4e4e"></div>
<div class="a" style="left:502.08px;top:227px;width:1.8px;height:9px;background:#4e4e4e"></div>
<div class="a" style="left:595.30px;top:116px;width:2px;height:120px;background:#545454"></div>
<div class="a" style="left:602.30px;top:124.6px;font-size:17px;color:#eee">2</div>
<div class="a" style="left:688.73px;top:137px;width:1.8px;height:9px;background:#4e4e4e"></div>
<div class="a" style="left:688.73px;top:167px;width:1.8px;height:9px;background:#4e4e4e"></div>
<div class="a" style="left:688.73px;top:197px;width:1.8px;height:9px;background:#4e4e4e"></div>
<div class="a" style="left:688.73px;top:227px;width:1.8px;height:9px;background:#4e4e4e"></div>
<div class="a" style="left:782.05px;top:137px;width:1.8px;height:9px;background:#4e4e4e"></div>
<div class="a" style="left:782.05px;top:167px;width:1.8px;height:9px;background:#4e4e4e"></div>
<div class="a" style="left:782.05px;top:197px;width:1.8px;height:9px;background:#4e4e4e"></div>
<div class="a" style="left:782.05px;top:227px;width:1.8px;height:9px;background:#4e4e4e"></div>
<div class="a" style="left:875.38px;top:137px;width:1.8px;height:9px;background:#4e4e4e"></div>
<div class="a" style="left:875.38px;top:167px;width:1.8px;height:9px;background:#4e4e4e"></div>
<div class="a" style="left:875.38px;top:197px;width:1.8px;height:9px;background:#4e4e4e"></div>
<div class="a" style="left:875.38px;top:227px;width:1.8px;height:9px;background:#4e4e4e"></div>
<div class="a" style="left:968.60px;top:116px;width:2px;height:120px;background:#545454"></div>
<div class="a" style="left:975.60px;top:124.6px;font-size:17px;color:#eee">3</div>
<div class="a" style="left:1062.03px;top:137px;width:1.8px;height:9px;background:#4e4e4e"></div>
<div class="a" style="left:1062.03px;top:167px;width:1.8px;height:9px;background:#4e4e4e"></div>
<div class="a" style="left:1062.03px;top:197px;width:1.8px;height:9px;background:#4e4e4e"></div>
<div class="a" style="left:1062.03px;top:227px;width:1.8px;height:9px;background:#4e4e4e"></div>
<div class="a" style="left:1155.35px;top:137px;width:1.8px;height:9px;background:#4e4e4e"></div>
<div class="a" style="left:1155.35px;top:167px;width:1.8px;height:9px;background:#4e4e4e"></div>
<div class="a" style="left:1155.35px;top:197px;width:1.8px;height:9px;background:#4e4e4e"></div>
<div class="a" style="left:1155.35px;top:227px;width:1.8px;height:9px;background:#4e4e4e"></div>
<div class="a" style="left:1248.67px;top:137px;width:1.8px;height:9px;background:#4e4e4e"></div>
<div class="a" style="left:1248.67px;top:167px;width:1.8px;height:9px;background:#4e4e4e"></div>
<div class="a" style="left:1248.67px;top:197px;width:1.8px;height:9px;background:#4e4e4e"></div>
<div class="a" style="left:1248.67px;top:227px;width:1.8px;height:9px;background:#4e4e4e"></div>
<div class="a" style="left:244.6px;top:120.5px;font-size:15.8px;font-weight:bold;color:#ee8d1e">B</div>
<svg class="a" style="left:223px;top:117px" width="8" height="10"><path d="M0 0H5.4L1.3 4.8V7H0Z" fill="#fff"/></svg>
<div class="lbl" style="top:146px">Tempo</div>
<div class="val" style="top:149.2px"><span>120.0</span></div>
<div class="lbl" style="top:176px">Key</div>
<div class="val" style="top:179.2px"><span>C</span></div>
<div class="lbl" style="top:206px">Dynamics</div>
<div class="val" style="top:209.2px"><span>N</span></div>
<div class="a" style="left:126px;top:235px;width:98px;height:1.5px;background:#555"></div>
<div class="a" style="left:223px;top:117px;width:1.2px;height:119px;background:#cdcdcd"></div>
<div id="piano" class="a">
<div class="bk" style="top:-14.60px;height:26.90px"></div>
<div class="wl" style="left:58px;width:39px;top:4.14px"></div>
<svg class="a" style="left:93px;top:1.54px" width="4" height="7"><path d="M3.9 0.3L0.3 3.5L3.9 6.7Z" fill="#000"/></svg>
<div class="bk" style="top:39.20px;height:26.90px"></div>
<div class="wl" style="left:58px;width:39px;top:45.29px"></div>
<svg class="a" style="left:93px;top:42.69px" width="4" height="7"><path d="M3.9 0.3L0.3 3.5L3.9 6.7Z" fill="#000"/></svg>
<div class="wl" style="top:92.10px"></div>
<svg class="a" style="left:93px;top:89.50px" width="4" height="7"><path d="M3.9 0.3L0.3 3.5L3.9 6.7Z" fill="#000"/></svg>
<div class="bk" style="top:119.90px;height:26.90px"></div>
<div class="wl" style="left:58px;width:39px;top:139.18px"></div>
<svg class="a" style="left:93px;top:136.58px" width="4" height="7"><path d="M3.9 0.3L0.3 3.5L3.9 6.7Z" fill="#000"/></svg>
<div class="bk" style="top:173.70px;height:26.90px"></div>
<div class="wl" style="left:58px;width:39px;top:186.25px"></div>
<svg class="a" style="left:93px;top:183.65px" width="4" height="7"><path d="M3.9 0.3L0.3 3.5L3.9 6.7Z" fill="#000"/></svg>
<div class="bk" style="top:227.50px;height:26.90px"></div>
<div class="wl" style="left:58px;width:39px;top:233.33px"></div>
<svg class="a" style="left:93px;top:230.73px" width="4" height="7"><path d="M3.9 0.3L0.3 3.5L3.9 6.7Z" fill="#000"/></svg>
<div class="wl" style="top:280.40px"></div>
<svg class="a" style="left:93px;top:277.80px" width="4" height="7"><path d="M3.9 0.3L0.3 3.5L3.9 6.7Z" fill="#000"/></svg>
<div class="bk" style="top:308.20px;height:26.90px"></div>
<div class="wl" style="left:58px;width:39px;top:326.94px"></div>
<svg class="a" style="left:93px;top:324.34px" width="4" height="7"><path d="M3.9 0.3L0.3 3.5L3.9 6.7Z" fill="#000"/></svg>
<div class="bk" style="top:362.00px;height:26.90px"></div>
<div class="wl" style="left:58px;width:39px;top:368.09px"></div>
<svg class="a" style="left:93px;top:365.49px" width="4" height="7"><path d="M3.9 0.3L0.3 3.5L3.9 6.7Z" fill="#000"/></svg>
<div class="wl" style="top:414.90px"></div>
<svg class="a" style="left:93px;top:412.30px" width="4" height="7"><path d="M3.9 0.3L0.3 3.5L3.9 6.7Z" fill="#000"/></svg>
<div class="bk" style="top:442.70px;height:26.90px"></div>
<div class="wl" style="left:58px;width:39px;top:461.98px"></div>
<svg class="a" style="left:93px;top:459.38px" width="4" height="7"><path d="M3.9 0.3L0.3 3.5L3.9 6.7Z" fill="#000"/></svg>
<div class="bk" style="top:496.50px;height:26.90px"></div>
<div class="wl" style="left:58px;width:39px;top:509.05px"></div>
<svg class="a" style="left:93px;top:506.45px" width="4" height="7"><path d="M3.9 0.3L0.3 3.5L3.9 6.7Z" fill="#000"/></svg>
<div class="a" style="left:68.5px;top:69.00px;font-size:16.3px;line-height:20px;color:#111">C5</div>
<div class="a" style="left:68.5px;top:391.80px;font-size:16.3px;line-height:20px;color:#111">C4</div>
</div>
<div class="a" style="left:223px;top:236px;width:1px;height:510px;background:#cfcfcf"></div>
<div class="a" style="left:126px;top:746px;width:1150px;height:17px;background:#04040c"></div>
<div class="a" style="left:1259px;top:116px;width:17px;height:647px;background:#04040c"></div>
<svg class="a" style="left:227px;top:748px" width="10" height="14"><path d="M9.5 0.5V13.5L0.5 7Z" fill="#ee8500"/></svg>
<div class="a" style="left:244px;top:747px;width:66px;height:15px;border-radius:5px;background:#ee8500"></div>
<svg class="a" style="left:1035px;top:748px" width="10" height="14"><path d="M0.5 0.5V13.5L9.5 7Z" fill="#ee8500"/></svg>
<div class="a" style="left:1075px;top:752px;width:158px;height:5px;background:#555"></div>
<div class="a" style="left:1151.5px;top:747px;width:5px;height:15px;background:#ee8500"></div>
<svg class="a" style="left:1048.3px;top:745.2px" width="20" height="20" viewBox="-10 -10 20 20"><circle cx="-1" cy="-1" r="5.2" fill="none" stroke="#e8e8e8" stroke-width="1.3"/><path d="M3 3L6.8 6.8" stroke="#e8e8e8" stroke-width="2"/><path transform="translate(-1 -1)" d="M-3 0H3" stroke="#e8e8e8" stroke-width="1.4"/></svg>
<svg class="a" style="left:1239.8px;top:745.2px" width="20" height="20" viewBox="-10 -10 20 20"><circle cx="-1" cy="-1" r="5.2" fill="none" stroke="#e8e8e8" stroke-width="1.3"/><path d="M3 3L6.8 6.8" stroke="#e8e8e8" stroke-width="2"/><path transform="translate(-1 -1)" d="M-3 0H3 M0 -3V3" stroke="#e8e8e8" stroke-width="1.4"/></svg>
<svg class="a" style="left:1260px;top:239px" width="16" height="12"><path d="M8 1L14.5 10.5H1.5Z" fill="#ee8500"/></svg>
<div class="a" style="left:1260px;top:362px;width:14px;height:47px;border-radius:5px;background:#ee8500"></div>
<svg class="a" style="left:1260px;top:521px" width="16" height="12"><path d="M8 11L14.5 1.5H1.5Z" fill="#ee8500"/></svg>
<svg class="a" style="left:1258.0px;top:536.0px" width="20" height="20" viewBox="-10 -10 20 20"><circle cx="-1" cy="-1" r="5.2" fill="none" stroke="#e8e8e8" stroke-width="1.3"/><path d="M3 3L6.8 6.8" stroke="#e8e8e8" stroke-width="2"/><path transform="translate(-1 -1)" d="M-3 0H3" stroke="#e8e8e8" stroke-width="1.4"/></svg>
<svg class="a" style="left:1258.0px;top:727.0px" width="20" height="20" viewBox="-10 -10 20 20"><circle cx="-1" cy="-1" r="5.2" fill="none" stroke="#e8e8e8" stroke-width="1.3"/><path d="M3 3L6.8 6.8" stroke="#e8e8e8" stroke-width="2"/><path transform="translate(-1 -1)" d="M-3 0H3 M0 -3V3" stroke="#e8e8e8" stroke-width="1.4"/></svg>
<div class="a" style="left:1265px;top:563px;width:5px;height:158px;background:#555"></div>
<div class="a" style="left:1260px;top:639px;width:15px;height:5px;background:#ee8500"></div>
<svg class="a" style="left:1254px;top:768px" width="22" height="22"><path d="M3 22L22 3M9 22L22 9M15 22L22 15" stroke="#999" stroke-width="1.6"/></svg>
<div id="menu" class="a">
<i style="position:absolute;left:-1px;top:150px;width:195px;height:24.6px;background:#ee8500"></i>
<div style="top:8.1px">Import...</div>
<div style="top:35.1px">Export</div>
<div style="top:74.7px">Preferences</div>
<div style="top:114.6px">Check for Update</div>
<div style="top:153.6px">Sign In</div>
<div style="top:194.1px">View Manual</div>
<div style="top:221.4px">Terms of Use</div>
<div style="top:248.7px">Privacy Policy</div>
<div style="top:276.1px">System information</div>
<div style="top:303.4px">Inquiry</div>
<div style="top:330.7px">Version information</div>
<hr style="top:61.4px">
<hr style="top:101.0px">
<hr style="top:140.9px">
<hr style="top:180.8px">
<svg style="position:absolute;left:174px;top:36px" width="12" height="14"><path d="M2.5 1.6L8.8 7L2.5 12.4" fill="none" stroke="#f6f6f6" stroke-width="2.8"/></svg>
</div>
<div class="a" style="left:1228px;top:72px;width:52px;height:45.5px;border:4px solid #f80008;border-radius:9px"></div>
</body>
</html>
